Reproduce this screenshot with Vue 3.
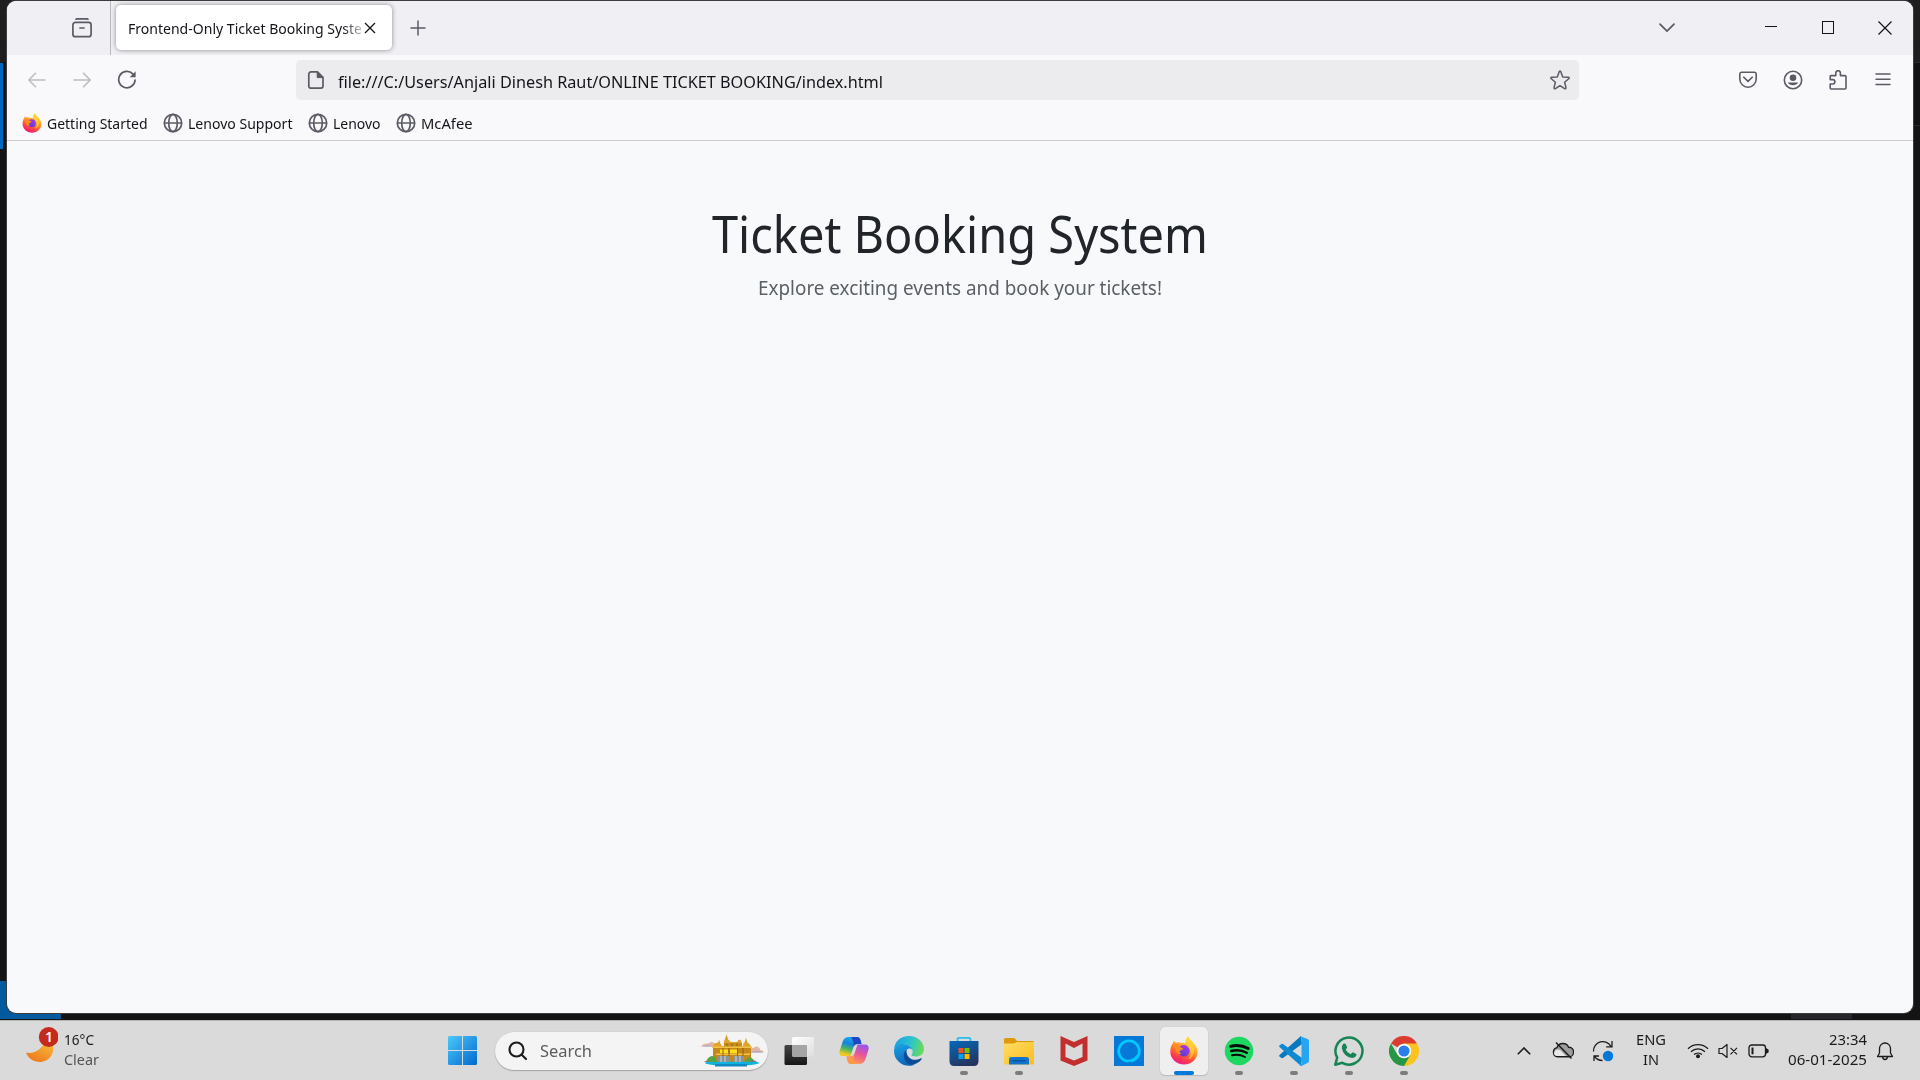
<script setup>
// Sets a text run to a given advance width, scaling its glyphs horizontally.
const vFit = {
  mounted(el, { value }) {
    const natural = el.getBoundingClientRect().width
    el.style.transform = `scaleX(${value / natural})`
    el.style.marginRight = `${value - natural}px`
  },
}

const bookmarks = [
  { label: 'Getting Started', width: 100.5, icon: 'firefox' },
  { label: 'Lenovo Support', width: 104.5, icon: 'globe' },
  { label: 'Lenovo', width: 47.5, icon: 'globe' },
  { label: 'McAfee', width: 51.5, icon: 'globe' },
]

const apps = [
  { id: 'taskview' },
  { id: 'copilot' },
  { id: 'edge' },
  { id: 'store', running: true },
  { id: 'explorer', running: true },
  { id: 'mcafee' },
  { id: 'alexa' },
  { id: 'firefox', active: true },
  { id: 'spotify', running: true },
  { id: 'vscode', running: true },
  { id: 'whatsapp', running: true },
  { id: 'chrome', running: true },
]
</script>

<template>
  <div class="desktop">
    <svg class="defs" width="0" height="0" aria-hidden="true">
      <defs>
        <linearGradient id="ffBody" x1=".75" y1="0" x2=".3" y2="1">
          <stop offset="0" stop-color="#fff14a" /><stop offset=".3" stop-color="#ffbd2e" />
          <stop offset=".55" stop-color="#ff7a2c" /><stop offset=".8" stop-color="#ff3650" /><stop offset="1" stop-color="#e5178f" />
        </linearGradient>
        <linearGradient id="ffCore" x1=".8" y1="0" x2=".2" y2="1">
          <stop offset="0" stop-color="#b833e1" /><stop offset=".5" stop-color="#7a3fe0" /><stop offset="1" stop-color="#5a3cc0" />
        </linearGradient>
        <symbol id="firefox" viewBox="0 0 28 29">
          <path fill="url(#ffBody)" d="M18 0c1 2.600 3.300 4 5 6.200 2.500 2.800 4.600 6 4.600 9.800C27.600 23 21.500 28.600 14 28.600S.300 23 .300 15.600C.300 12 1.300 9 3 7.200L3.700 4.700 6 6.800C8 6 9.800 6.200 11.400 7.200L13.600 6.800 15.500 7.600C15 5 16 2 18 0Z" />
          <circle cx="13.800" cy="14.800" r="5.800" fill="url(#ffCore)" />
          <path fill="#ff8a24" d="M2.800 8.600 6.500 8.500C8.500 9.500 10 11.400 13.300 12.200 13 13.800 10.500 14.200 9.800 15c-.6 1 .2 2.200 1.600 2.700-2 1.600-5.400.2-6-3.200Z" />
          <path fill="#ffd23c" d="M18 1c2 5 7 7.500 6 14.500-.6 4-3 6.800-5.500 7.800 2.500-3.300 2.700-7 1.500-9.800-1-2.500-3.800-5-4-7C15.800 4 16.800 2.300 18 1Z" opacity=".75" />
        </symbol>
        <symbol id="globe" viewBox="0 0 20 20">
          <g fill="none" stroke="#5b5b66" stroke-width="1.700">
            <circle cx="10" cy="10" r="8.700" /><ellipse cx="10" cy="10" rx="4.300" ry="8.700" /><path d="M1.300 10H18.700" />
          </g>
        </symbol>
      </defs>
    </svg>

    <div class="behind behind-left-top"></div>
    <div class="behind behind-left-bottom"></div>
    <div class="behind behind-right"></div>
    <div class="behind behind-bottom"></div>

    <main class="window">
      <header class="tabbar">
        <div class="archive">
          <svg width="20" height="20" viewBox="0 0 20 20" fill="none" stroke="#5b5b66" stroke-width="1.700" stroke-linecap="round">
            <path d="M4 1.200 4.600.900H15.400L16 1.200" /><rect x=".900" y="4.400" width="18.200" height="14.300" rx="2.500" /><path d="M8 10H12" />
          </svg>
        </div>
        <div class="tab">
          <div class="tab-title"><span v-fit="247" class="text">Frontend-Only Ticket Booking System</span></div>
          <svg width="12" height="12" viewBox="0 0 12 12" stroke="#15141a" stroke-width="1.300"><path d="M1 1 11 11M11 1 1 11" /></svg>
        </div>
        <svg class="new-tab" width="16" height="16" viewBox="0 0 16 16" stroke="#5b5b66" stroke-width="1.500"><path d="M.500 8H15.500M8 .500V15.500" /></svg>
        <svg class="all-tabs" width="16" height="10" viewBox="0 0 16 10" fill="none" stroke="#5b5b66" stroke-width="1.700" stroke-linecap="round" stroke-linejoin="round"><path d="M1 1.200 8 8.200 15 1.200" /></svg>
        <div class="controls">
          <svg width="14" height="14" viewBox="0 0 14 14" stroke="#15141a" shape-rendering="crispEdges"><path d="M1 5.500H13" /></svg>
          <svg width="14" height="14" viewBox="0 0 14 14" fill="none" stroke="#15141a" shape-rendering="crispEdges"><rect x="1.500" y=".500" width="11" height="12" /></svg>
          <svg width="14" height="14" viewBox="0 0 14 14" stroke="#15141a" stroke-width="1.200"><path d="M.500.500 13.500 13.500M13.500.500.500 13.500" /></svg>
        </div>
      </header>

      <nav class="toolbar">
        <div class="nav-buttons">
          <svg width="20" height="20" viewBox="0 0 20 20" fill="none" stroke="#bcbcc2" stroke-width="1.600" stroke-linecap="round" stroke-linejoin="round"><path d="M18 10H2M8.500 3.300 1.800 10 8.500 16.700" /></svg>
          <svg width="20" height="20" viewBox="0 0 20 20" fill="none" stroke="#bcbcc2" stroke-width="1.600" stroke-linecap="round" stroke-linejoin="round"><path d="M2 10H18M11.500 3.300 18.200 10 11.500 16.700" /></svg>
          <svg width="20" height="20" viewBox="0 0 20 20" fill="none" stroke="#5b5b66" stroke-width="1.700" stroke-linecap="round"><path d="M15.800 3.900A8.200 8.200 0 1 0 18.100 10" /><path d="M18.600 1.300V7.200H12.700Z" fill="#5b5b66" stroke="none" /></svg>
        </div>
        <div class="urlbar">
          <svg width="18" height="20" viewBox="0 0 18 20" fill="none" stroke="#5b5b66" stroke-width="1.700" stroke-linejoin="round"><path d="M4 1.900H10.500L16 7.300V16A2.200 2.200 0 0 1 13.800 18.200H4A2.200 2.200 0 0 1 1.800 16V4.100A2.200 2.200 0 0 1 4 1.900Z" /><path d="M10.200 1.900V7.600H16Z" fill="#5b5b66" stroke-width="1" /></svg>
          <span v-fit="545" class="text url">file:///C:/Users/Anjali Dinesh Raut/ONLINE TICKET BOOKING/index.html</span>
          <svg class="star" width="20" height="20" viewBox="0 0 20 20" fill="none" stroke="#5b5b66" stroke-width="1.500" stroke-linejoin="round"><path d="M9.200 1.700Q10 .400 10.800 1.700L12.700 6.900 18.200 7.300Q19.800 7.600 18.700 8.800L14.600 12.300 16 17.600Q16 19.200 14.600 18.600L10 15.700 5.400 18.600Q4 19.200 4 17.600L5.400 12.300 1.300 8.800Q.200 7.600 1.800 7.300L7.300 6.900Z" /></svg>
        </div>
        <div class="actions">
          <svg width="20" height="20" viewBox="0 0 20 20" fill="none" stroke="#5b5b66" stroke-width="1.600" stroke-linecap="round" stroke-linejoin="round"><path d="M3.500 2.200H16.500A1.900 1.900 0 0 1 18.200 4.100V9A8.200 8.200 0 0 1 1.800 9V4.100A1.900 1.900 0 0 1 3.500 2.200Z" /><path d="M5.800 7.200 10 11.400 14.200 7.200" /></svg>
          <svg width="20" height="20" viewBox="0 0 20 20"><circle cx="10" cy="10" r="8.700" fill="none" stroke="#5b5b66" stroke-width="1.600" /><circle cx="10" cy="7.700" r="3.300" fill="#5b5b66" /><path d="M4.800 12.500H15.200A5.700 4.600 0 0 1 4.800 12.500Z" fill="#5b5b66" /></svg>
          <svg width="20" height="20" viewBox="0 0 20 20" fill="none" stroke="#5b5b66" stroke-width="1.600" stroke-linejoin="round"><path d="M7.800 5.600V3A2.300 2.300 0 0 1 12.400 3V5.600H17A1 1 0 0 1 18 6.600V18A1 1 0 0 1 17 19H3.200A1 1 0 0 1 2.200 18V14H4.700A2.200 2.200 0 0 0 4.700 9.600H2.200V6.600A1 1 0 0 1 3.200 5.600Z" /></svg>
          <svg width="20" height="20" viewBox="0 0 20 20" stroke="#5b5b66" stroke-width="1.500" stroke-linecap="round"><path d="M3 4H17M3 9.300H17M3 14.600H17" /></svg>
        </div>
      </nav>

      <div class="bookmarks">
        <div v-for="b in bookmarks" :key="b.label" class="bookmark">
          <svg width="20" height="20"><use :href="'#' + b.icon" /></svg>
          <span v-fit="b.width" class="text">{{ b.label }}</span>
        </div>
      </div>

      <section class="page">
        <h1><span v-fit="496" class="text">Ticket Booking System</span></h1>
        <p><span v-fit="404" class="text">Explore exciting events and book your tickets!</span></p>
      </section>
    </main>

    <footer class="taskbar">
      <div class="weather">
        <svg width="34" height="40" viewBox="0 0 34 40">
          <defs><linearGradient id="moon" x1="1" y1="0" x2=".3" y2="1"><stop offset="0" stop-color="#f9c440" /><stop offset="1" stop-color="#ee7a1c" /></linearGradient></defs>
          <path d="M2 25.500C10 27.500 19 22 22 12L28 16C32 26 25 35 16 35 9 35 4 31 2 25.500Z" fill="url(#moon)" />
          <circle cx="24.700" cy="10" r="9.900" fill="#c42b1c" />
          <text x="25" y="15" text-anchor="middle" font-size="14" font-weight="600" fill="#fff" font-family="Noto Sans, sans-serif">1</text>
        </svg>
        <div class="lines left">
          <span v-fit="30" class="text">16°C</span>
          <span v-fit="35" class="text dim">Clear</span>
        </div>
      </div>

      <div class="center">
        <svg width="29" height="29" viewBox="0 0 29 29">
          <defs><linearGradient id="win" x1="0" y1="0" x2="1" y2="1" gradientUnits="objectBoundingBox"><stop offset="0" stop-color="#4cc8fb" /><stop offset="1" stop-color="#0069cf" /></linearGradient><mask id="winPanes"><path fill="#fff" d="M0 1.500Q0 0 1.500 0H14V14H0ZM15 0H27.500Q29 0 29 1.500V14H15ZM0 15H14V29H1.500Q0 29 0 27.500ZM15 15H29V27.500Q29 29 27.500 29H15Z" /></mask></defs>
          <rect width="29" height="29" fill="url(#win)" mask="url(#winPanes)" />
        </svg>
        <div class="search">
          <svg width="20" height="20" viewBox="0 0 20 20" fill="none" stroke="#1c1c1c" stroke-width="2.100" stroke-linecap="round"><circle cx="8.500" cy="8.500" r="7" /><path d="M13.700 13.700 18 18" /></svg>
          <span v-fit="52" class="text">Search</span>
          <svg class="temple" width="64" height="34" viewBox="0 0 64 34">
            <path d="M1 12.500Q3 9 8 9.500L11 8Q15 7.500 16 12.500ZM48 18.500Q49 14 53 14L56 12.500Q60 12.500 60 16Q64 16 63.500 18.500Z" fill="#e2b5a4" />
            <path d="M50 18.500Q56 16 63.500 18.500ZM2 12.500Q8 10.500 15 12.500Z" fill="#9fa6cf" />
            <ellipse cx="32" cy="29" rx="27" ry="2.800" fill="#0fb3dd" /><path d="M15 30H47V32.500H15Z" fill="#1289c2" />
            <path d="M13 13H51V27.500H13Z" fill="#c58717" />
            <path d="M17.500 12 19 5.500 21 12ZM44 11 46 3.500 48 11ZM24 8 26.500.500 29 8Z" fill="#d99b22" />
            <path d="M13 13.500Q12.500 9 18 8.500Q21 9 22 12H24Q23 6 26.500 5.500Q30 6 30.500 8H37Q38 5.500 40 5.500Q42 7 42 12H43Q43 8 46 8Q50.500 9 51 13.500Z" fill="#dfa52b" />
            <path d="M24 9H42V13H24Z" fill="#c98d1d" />
            <path d="M12 13.300H52M16 20.300H50" stroke="#f3c244" stroke-width="1.500" />
            <path d="M20 15.500H28V19H20ZM30 15.500H37V19H30Z" fill="#ffdf19" />
            <path d="M23 14V27M29 14V27M37.500 14V27M43 14V27M27 9.500V12M32 9.500V12M37 9.500V12" stroke="#8d5b10" stroke-width=".900" />
            <path d="M18 22H30V28H18ZM33 22H44V28H33Z" fill="#8b9397" /><path d="M21 22V28M25 22V28M36 22V28M40 22V28" stroke="#d2d5d5" />
            <path d="M6 28Q8 22.500 12 22Q16 22 17 28ZM45 27.500Q48 22 51 23.500Q54 25 54.500 28Z" fill="#54a542" /><path d="M4 28Q7 25.500 10 28M49 28Q53 24.500 57 28" fill="#777d78" />
          </svg>
        </div>

        <div class="apps">
          <div v-for="a in apps" :key="a.id" class="app" :class="{ active: a.active, running: a.running }">
            <svg v-if="a.id === 'taskview'" width="30" height="30" viewBox="0 0 30 30">
              <defs><linearGradient id="tvD" x1="0" y1="0" x2="0" y2="1"><stop offset="0" stop-color="#454545" /><stop offset="1" stop-color="#171717" /></linearGradient><linearGradient id="tvL" x1="0" y1="0" x2="1" y2="1"><stop offset="0" stop-color="#fff" /><stop offset="1" stop-color="#dedede" /></linearGradient></defs>
              <rect x="8" y="1" width="22" height="19.500" rx="1.500" fill="url(#tvL)" /><rect x=".500" y="9" width="22.500" height="20" rx="1.500" fill="url(#tvD)" /><path d="M8 9H23V21H9.500Q8 21 8 19.500Z" fill="#a5a5a5" />
            </svg>

            <svg v-else-if="a.id === 'copilot'" width="30" height="30" viewBox="0 0 30 30">
              <defs>
                <linearGradient id="cpA" x1=".5" y1="0" x2=".2" y2="1"><stop offset="0" stop-color="#1aa8f0" /><stop offset=".35" stop-color="#1684dc" /><stop offset=".62" stop-color="#4ab563" /><stop offset=".9" stop-color="#f3c81e" /></linearGradient>
                <linearGradient id="cpB" x1=".7" y1="0" x2=".3" y2="1"><stop offset="0" stop-color="#9b52ec" /><stop offset=".45" stop-color="#e6559b" /><stop offset=".8" stop-color="#f9816a" /><stop offset="1" stop-color="#ffae4e" /></linearGradient>
              </defs>
              <path d="M10 1H18Q20.500 1 21.500 4L22.500 8H18.500Q15.500 8 14.500 11L11.500 20H4Q-.500 20 .500 15.500L3.500 6Q5 1 10 1Z" fill="url(#cpA)" />
              <path d="M14 1H18Q20.500 1 21.500 4L22.500 8H18.500Q15.500 8 14.500 11Q15 5 12 1Z" fill="#2146c4" />
              <path d="M20 28H12Q9.500 28 8.500 25L7.500 20.500H11.500Q14.500 20.500 15.500 17.500L18.500 8.500H26Q30.500 9 29.500 13.500L26.500 23Q25 28 20 28Z" fill="url(#cpB)" />
              <path d="M7.500 20.500H11.500Q14.500 20.500 15.500 17.500Q14 23 16 28H12Q9.500 28 8.500 25Z" fill="#ff9848" />
            </svg>

            <svg v-else-if="a.id === 'edge'" width="30" height="30" viewBox="0 0 30 30">
              <defs><linearGradient id="egA" x1="0" y1=".3" x2="1" y2=".5"><stop offset="0" stop-color="#1a9fe0" /><stop offset=".55" stop-color="#2bc4cf" /><stop offset="1" stop-color="#6bdc54" /></linearGradient><linearGradient id="egB" x1=".4" y1="0" x2=".6" y2="1"><stop offset="0" stop-color="#199fe3" /><stop offset="1" stop-color="#0a62b8" /></linearGradient></defs>
              <path d="M0 13C1 5 7 0 15 0 24 0 30 6.500 30 13 30 18 26 20.500 22 20.500 19 20.500 17 19.500 17.500 18.500 18.500 17.500 19 16.500 18.500 14.500 17 10 12 7.500 8 8.500 4 9 1 11 0 13Z" fill="url(#egA)" />
              <path d="M0 15C0 10 5 7.500 9.500 8 14 8.500 18 11 18.500 14.500 17 11.500 13 12 12 15.500 10 22 15 27.500 21 28.500 17 30.500 10 30.500 5 26 1.500 23 0 19 0 15Z" fill="url(#egB)" />
              <path d="M12.500 14C8 17 9 25 15 28 18 29.500 24 28 27.500 23.500 28 22.500 27.500 22 26.500 22.500 20 26 12 22.500 12.500 14Z" fill="#0c4b96" />
            </svg>

            <svg v-else-if="a.id === 'store'" width="30" height="30" viewBox="0 0 30 30">
              <defs><linearGradient id="stA" x1=".2" y1="0" x2=".6" y2="1"><stop offset="0" stop-color="#0665b5" /><stop offset="1" stop-color="#26345c" /></linearGradient></defs>
              <path d="M8.500 6V3.500Q8.500 1.800 10.200 1.800H19.800Q21.500 1.800 21.500 3.500V6" fill="none" stroke="#28bcf0" stroke-width="1.800" />
              <path d="M.500 5H29.500V25Q29.500 30 25 30H5Q.500 30 .500 25Z" fill="url(#stA)" />
              <path d="M9.500 12H14.500V17H9.500Z" fill="#f25022" /><path d="M15.500 12H20.500V17H15.500Z" fill="#7fba00" /><path d="M9.500 18H14.500V23H9.500Z" fill="#00a4ef" /><path d="M15.500 18H20.500V23H15.500Z" fill="#ffb900" />
            </svg>

            <svg v-else-if="a.id === 'explorer'" width="30" height="30" viewBox="0 0 30 30">
              <defs><linearGradient id="exA" x1="0" y1="0" x2="1" y2="1"><stop offset="0" stop-color="#ffdc66" /><stop offset="1" stop-color="#fbbd1b" /></linearGradient></defs>
              <path d="M0 3.500Q0 2 1.500 2H9.500Q10.500 2 11.200 2.800L13 5H29Q30 5 30 6.500V9H0Z" fill="#dc9a0c" />
              <path d="M0 7.500H9Q10.500 7.500 11.500 6.700L12.500 6H30V27Q30 28.500 28.500 28.500H1.500Q0 28.500 0 27Z" fill="url(#exA)" />
              <path d="M5 28.500V23.500Q5 21 7.500 21H22.500Q25 21 25 23.500V28.500Z" fill="#1174cc" /><path d="M9 24.800H21" stroke="#084c91" stroke-width="1.200" stroke-linecap="round" />
            </svg>

            <svg v-else-if="a.id === 'mcafee'" width="30" height="30" viewBox="0 0 30 30">
              <path d="M1.500 0 15 6 28.500 0V24.500L15 30 1.500 24.500ZM6.500 7.500V21L15 24.500 23.500 21V7.500L15 12Z" fill="#c22f2e" fill-rule="evenodd" />
            </svg>

            <svg v-else-if="a.id === 'alexa'" width="30" height="30" viewBox="0 0 30 30">
              <rect width="30" height="30" fill="#0578d8" /><path d="M13 25.200A10.300 10.300 0 1 1 17 25.200" fill="none" stroke="#00caff" stroke-width="2.700" /><path d="M12.500 23.500Q19 24.500 23.500 18 22 25 13 26.500Z" fill="#00caff" />
            </svg>

            <svg v-else-if="a.id === 'firefox'" width="28" height="29"><use href="#firefox" /></svg>

            <svg v-else-if="a.id === 'spotify'" width="30" height="30" viewBox="0 0 30 30">
              <circle cx="15" cy="15" r="14.300" fill="#1ed760" /><g fill="none" stroke="#080808" stroke-linecap="round"><path d="M6.500 10.300Q16 7.800 24.300 12.500" stroke-width="2.900" /><path d="M7.200 15Q15.500 12.700 22.700 16.800" stroke-width="2.400" /><path d="M8 19.300Q15 17.500 21 21" stroke-width="2" /></g>
            </svg>

            <svg v-else-if="a.id === 'vscode'" width="30" height="30" viewBox="0 0 30 30">
              <path d="M22 0 23 8 4 22 2.800 22.300.500 20.500Q-.200 19.800.500 19Z" fill="#0879be" />
              <path d="M22 30 23 22 4 8 2.800 7.700.500 9.500Q-.200 10.200.500 11Z" fill="#0d8ad2" />
              <path d="M21.500.200 28.500 3Q30 3.600 30 5V25Q30 26.400 28.500 27L22.500 29.900Q21.500 30 20.500 29.300 22.500 29.500 22.500 27.500V2.500Q22.500.500 20.500.700Z" fill="#25a6f2" />
            </svg>

            <svg v-else-if="a.id === 'whatsapp'" width="30" height="30" viewBox="0 0 30 30">
              <path d="M1.300 28.700 3.200 21.700A13.500 13.500 0 1 1 8.300 26.800Z" fill="none" stroke="#168554" stroke-width="2.500" stroke-linejoin="round" />
              <path d="M9.300 7.800Q10.800 6.900 11.700 8L13 11Q13.300 11.700 12.600 12.500L11.700 13.700Q13.200 16.700 16.700 18.300L18 16.700Q18.500 16.100 19.300 16.400L22.200 17.900Q22.800 18.300 22.400 19.300 21.300 22.400 17.800 22 9.500 20.300 7.800 12.200 7.700 9.400 9.300 7.800Z" fill="#168554" />
            </svg>

            <svg v-else width="30" height="30" viewBox="0 0 30 30">
              <path d="M15 15 2 7.500A15 15 0 0 1 28 7.500Z" fill="#dc3b2f" /><path d="M15 15V7.500H28A15 15 0 0 1 15 30Z" fill="#fcc31e" /><path d="M15 15 21.500 18.800 15 30A15 15 0 0 1 2 7.500L8.500 18.800Z" fill="#269747" />
              <circle cx="15" cy="15" r="7.300" fill="#fff" /><circle cx="15" cy="15" r="5.600" fill="#2b7de9" />
            </svg>
          </div>
        </div>
      </div>

      <div class="tray">
        <svg class="tray-up" width="14" height="8" viewBox="0 0 14 8" fill="none" stroke="#1b1b1b" stroke-width="1.600"><path d="M.800 7.200 7 1 13.200 7.200" /></svg>
        <svg class="tray-cloud" width="22" height="20" viewBox="0 0 22 20" fill="none" stroke="#1b1b1b" stroke-width="1.400">
          <path d="M5.500 15.800A4.700 4.700 0 0 1 5 6.600 6.300 6.300 0 0 1 16.600 6.200 4.800 4.800 0 0 1 17 15.800Z" fill="#9c9c9c" /><path d="M2 13Q2 9 5.500 8.500 9 8.500 10 11L14 15H5Q2.500 15 2 13Z" fill="#e9e9e9" stroke="none" /><path d="M4 1.500 19.500 17.500" />
        </svg>
        <svg class="tray-sync" width="22" height="22" viewBox="0 0 22 22" fill="none" stroke="#1b1b1b" stroke-width="1.300"><path d="M1.500 11.500A9.300 9.300 0 0 1 19 6.500M20 1V6.800H14.200M2 21V16H7M2.500 16.500Q5.500 20.500 10.500 20.500" /><circle cx="16" cy="16" r="5.200" fill="#0078d7" stroke="none" /></svg>
        <div class="lines lang"><span v-fit="30" class="text">ENG</span><span v-fit="16" class="text">IN</span></div>
        <svg class="tray-wifi" width="22" height="16" viewBox="0 0 22 16" fill="none" stroke="#1b1b1b" stroke-width="1.300"><path d="M1 5.800A14 14 0 0 1 21 5.800M4 8.800A10 10 0 0 1 18 8.800M7 11.600A6 6 0 0 1 15 11.600" /><circle cx="11" cy="13.200" r="2" fill="#1b1b1b" stroke="none" /></svg>
        <svg class="tray-sound" width="20" height="16" viewBox="0 0 20 16" fill="none" stroke="#1b1b1b" stroke-width="1.200" stroke-linejoin="round"><path d="M1 5.500H4L9 1.500V14.500L4 10.500H1ZM12.500 4.800 19 11.300M19 4.800 12.500 11.300" /></svg>
        <svg class="tray-battery" width="21" height="14" viewBox="0 0 21 14" fill="none" stroke="#1b1b1b" stroke-width="1.300"><rect x="1" y="1" width="16.500" height="11.800" rx="2.800" /><path d="M3.500 3.500H5.500V10.300H3.500Z" fill="#1b1b1b" stroke="none" /><path d="M18.300 5V9L20 8V6Z" fill="#1b1b1b" /></svg>
        <div class="lines clock"><span v-fit="38" class="text">23:34</span><span v-fit="79" class="text">06-01-2025</span></div>
        <svg class="tray-bell" width="18" height="20" viewBox="0 0 18 20" fill="none" stroke="#1b1b1b" stroke-width="1.300" stroke-linejoin="round"><path d="M3.500 12V7.500A5.500 5.500 0 0 1 14.500 7.500V12L16.500 15.500H1.500ZM6.500 16Q7 18.500 9 18.500T11.500 16" /></svg>
      </div>
    </footer>
  </div>
</template>

<style>
html,
body {
  overflow: hidden;
  background: #141414;
}
</style>

<style scoped>
.desktop {
  position: relative;
  display: flex;
  flex-direction: column;
  box-sizing: border-box;
  width: 1920px;
  height: 1080px;
  overflow: hidden;
  background: linear-gradient(#1e1e1e 0 62px, #141414 62px);
  font-family: "Noto Sans", "Open Sans", sans-serif;
  font-size: 15px;
  color: #15141a;
}
.defs { position: absolute; }
svg { flex: none; display: block; }
.text {
  display: inline-block;
  flex: none;
  white-space: nowrap;
  transform-origin: 0 50%;
}

.behind { position: absolute; }
.behind-left-top { left: 0; top: 63px; width: 3px; height: 86px; background: #0067c0; }
.behind-left-bottom { left: 0; top: 981px; width: 61px; height: 38px; background: #005a9e; }
.behind-right { right: 0; top: 62px; width: 6px; height: 62px; background: #111; border: solid #292929; border-width: 1px 0; }
.behind-bottom { left: 1791px; top: 1013px; width: 61px; height: 6px; background: #25272b; }

.window {
  position: relative;
  display: flex;
  flex-direction: column;
  flex: none;
  width: 1906px;
  height: 1012px;
  margin: 1px 0 7px 7px;
  border-radius: 9px;
  overflow: hidden;
  background: #f8f9fb;
  box-shadow: 0 0 0 1px #3d3c3f;
}
.tabbar {
  display: flex;
  align-items: center;
  height: 54px;
  background: #f0eff4;
}
.archive {
  box-sizing: border-box;
  display: flex;
  align-items: center;
  width: 104px;
  height: 54px;
  padding-left: 65px;
  border-right: 1px solid #b9b8bd;
}
.tab {
  box-sizing: border-box;
  display: flex;
  align-items: center;
  gap: 3px;
  width: 276px;
  height: 45px;
  margin: -1px 0 0 5px;
  padding-left: 12px;
  border-radius: 5px;
  background: #fff;
  box-shadow: 0 0 5px rgba(0, 0, 0, 0.42);
}
.tab-title {
  width: 233px;
  overflow: hidden;
  font-size: 14.5px;
  mask-image: linear-gradient(90deg, #000 215px, transparent 240px);
}
.new-tab { margin-left: 18px; }
.all-tabs { margin-left: auto; }
.controls { display: flex; gap: 43px; margin: 0 21px 0 89px; }

.toolbar {
  display: flex;
  align-items: center;
  height: 50px;
  background: #f9f9fb;
}
.nav-buttons { display: flex; gap: 25px; width: 269px; padding-left: 20px; }
.urlbar {
  box-sizing: border-box;
  display: flex;
  align-items: center;
  width: 1283px;
  height: 40px;
  padding: 0 9px 0 11px;
  border-radius: 5px;
  background: #ececee;
}
.url { margin-left: 13px; padding-top: 3px; font-size: 17px; }
.star { margin-left: auto; }
.actions { display: flex; gap: 25px; margin-left: 159px; }

.bookmarks {
  box-sizing: border-box;
  display: flex;
  gap: 16px;
  height: 36px;
  padding-left: 15px;
  border-bottom: 1px solid #c9c9ce;
  background: #f9f9fb;
}
.bookmark { display: flex; align-items: center; gap: 4.5px; height: 36px; font-size: 15px; }
.bookmark .text { margin-top: -1px; }

.page { text-align: center; color: #212529; }
h1 { margin: 60px 0 0; font-size: 51px; font-weight: 400; line-height: 64px; }
p { margin: 7px 0 0; font-size: 20px; line-height: 32px; color: #5b6065; }

.taskbar {
  box-sizing: border-box;
  position: relative;
  display: flex;
  align-items: center;
  flex: none;
  height: 60px;
  border-top: 1px solid #b4b4b4;
  background: #dadada;
}
.weather { display: flex; align-items: center; gap: 6px; width: 448px; padding-left: 24px; box-sizing: border-box; }
.weather > svg { margin-top: -7px; }
.lines { display: flex; flex-direction: column; margin-top: -3px; font-size: 15px; line-height: 20px; color: #1b1b1b; }
.left { align-items: flex-start; }
.dim { color: #545454; }
.center { display: flex; align-items: center; }
.search {
  box-sizing: border-box;
  display: flex;
  align-items: center;
  width: 273px;
  height: 38px;
  margin: 0 3px 0 18px;
  padding: 0 4px 0 13px;
  border-radius: 19px;
  background: #f4f4f4;
  box-shadow: 0 1px 1px #a5a5a5, 0 0 1px #b5b5b5;
  color: #5c5c5c;
  font-size: 16.500px;
}
.search .text { margin-left: 12px; }
.temple { margin-left: auto; }
.apps { display: flex; gap: 7px; padding-left: 4px; }
.app {
  position: relative;
  display: flex;
  align-items: center;
  justify-content: center;
  width: 48px;
  height: 48px;
  border-radius: 5px;
}
.app.active { background: #efefef; box-shadow: 0 0 1px #aaa, 0 1px 1px #bdbdbd; }
.app.active::after,
.app.running::after {
  content: "";
  position: absolute;
  left: 20px;
  bottom: 0;
  width: 8px;
  height: 4px;
  border-radius: 2px;
  background: #7c7c7c;
}
.app.active::after { left: 14px; width: 20px; background: #0078d7; }

.tray { display: flex; align-items: center; margin: 0 26px 0 auto; }
.tray-cloud { margin-left: 21px; }
.tray-sync { margin-left: 18px; }
.lang { align-items: center; width: 32px; margin-left: 21px; }
.tray-wifi { margin-left: 20px; }
.tray-sound { margin-left: 9px; }
.tray-battery { margin-left: 10px; }
.clock { align-items: flex-end; width: 80px; margin-left: 18px; }
.tray-bell { margin-left: 9px; }
</style>
